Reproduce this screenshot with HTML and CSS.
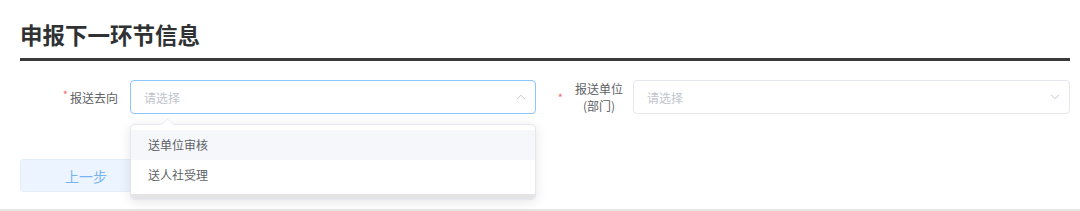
FILE: index.html
```html
<!DOCTYPE html>
<html lang="zh-CN">
<head>
<meta charset="utf-8">
<link rel="stylesheet" href="styles.css">
</head>
<body>
<div class="page">
  <h2 class="title">申报下一环节信息</h2>
  <div class="form-row">
    <div class="form-item item-1">
      <label class="label label-1"><span class="star">*</span>报送去向</label>
      <div class="select is-focus">
        <span class="placeholder">请选择</span>
        <svg class="chev" width="10" height="6" viewBox="0 0 10 6"><path d="M1 5.2 L5 1.2 L9 5.2" fill="none" stroke="#c0c4cc" stroke-width="1"/></svg>
      </div>
    </div>
    <div class="form-item item-2">
      <label class="label label-2"><span class="star star-2">*</span><span class="two-line">报送单位<br>(部门)</span></label>
      <div class="select">
        <span class="placeholder">请选择</span>
        <svg class="chev" width="10" height="6" viewBox="0 0 10 6"><path d="M1 0.8 L5 4.8 L9 0.8" fill="none" stroke="#c0c4cc" stroke-width="1"/></svg>
      </div>
    </div>
  </div>
  <div class="btn-row">
    <button class="btn-prev">上一步</button>
  </div>
  <div class="dropdown">
    <div class="arrow"></div>
    <ul class="options">
      <li class="option hover">送单位审核</li>
      <li class="option">送人社受理</li>
    </ul>
    <div class="strip"></div>
  </div>
</div>
</body>
</html>
```

FILE: styles.css
```css
html, body {
  margin: 0;
  padding: 0;
  background: #fff;
}
body {
  font-family: "Noto Sans CJK SC", "Noto Sans", sans-serif;
  color: #606266;
  width: 1080px;
  height: 211px;
  overflow: hidden;
}
.page {
  position: relative;
  padding: 17px 10px 0 20px;
  height: 192px;
  border-bottom: 2px solid #e6e6e6;
}
.title {
  margin: 0;
  font-size: 22.5px;
  line-height: 35px;
  font-weight: 700;
  color: #303133;
  padding-bottom: 6px;
  border-bottom: 3px solid #3a3a3a;
}
.form-row {
  display: flex;
  margin-top: 19px;
  height: 34px;
}
.form-item {
  display: flex;
  align-items: center;
}
.label {
  display: flex;
  align-items: center;
  justify-content: flex-end;
  font-size: 12px;
  color: #606266;
  box-sizing: border-box;
}
.label-1 {
  width: 110px;
  padding-right: 12px;
}
.star {
  color: #f56c6c;
  margin-right: 2px;
  font-size: 11px;
  position: relative;
  top: -3px;
}
.label-2 {
  width: 97px;
  padding-right: 10px;
}
.star-2 {
  margin-right: 12px;
  top: 0;
}
.two-line {
  text-align: center;
  line-height: 17px;
}
.select {
  box-sizing: border-box;
  height: 34px;
  border: 1px solid #e4e7ed;
  border-radius: 4px;
  display: flex;
  align-items: center;
  justify-content: space-between;
  padding: 0 9px 0 13px;
}
.item-1 .select {
  width: 406px;
}
.item-2 .select {
  width: 437px;
}
.select.is-focus {
  border-color: #8cc5ff;
}
.placeholder {
  font-size: 12px;
  color: #c0c4cc;
}
.chev {
  display: block;
}
.btn-row {
  margin-top: 45px;
}
.btn-prev {
  width: 132px;
  height: 33px;
  border: 1px solid #e4eefb;
  border-radius: 3px;
  background: #ecf5ff;
  color: #79b3f0;
  font-family: inherit;
  font-size: 14px;
  padding: 0;
}
.dropdown {
  position: absolute;
  left: 130px;
  top: 124px;
  width: 406px;
  box-sizing: border-box;
  background: #fff;
  border: 1px solid #e4e7ed;
  border-radius: 4px;
  box-shadow: 0 2px 12px rgba(0, 0, 0, 0.1);
}
.arrow {
  position: absolute;
  left: 32px;
  top: -5px;
  width: 8px;
  height: 8px;
  background: #fff;
  border-left: 1px solid #ebeef5;
  border-top: 1px solid #ebeef5;
  transform: rotate(45deg);
}
.options {
  list-style: none;
  margin: 0;
  padding: 5px 0 4px;
}
.option {
  height: 30px;
  line-height: 30px;
  padding: 0 17px;
  font-size: 12px;
  color: #606266;
}
.option.hover {
  background: #f5f7fa;
}
.strip {
  height: 5px;
  background: #e4e4e4;
  border-radius: 0 0 4px 4px;
}
```
